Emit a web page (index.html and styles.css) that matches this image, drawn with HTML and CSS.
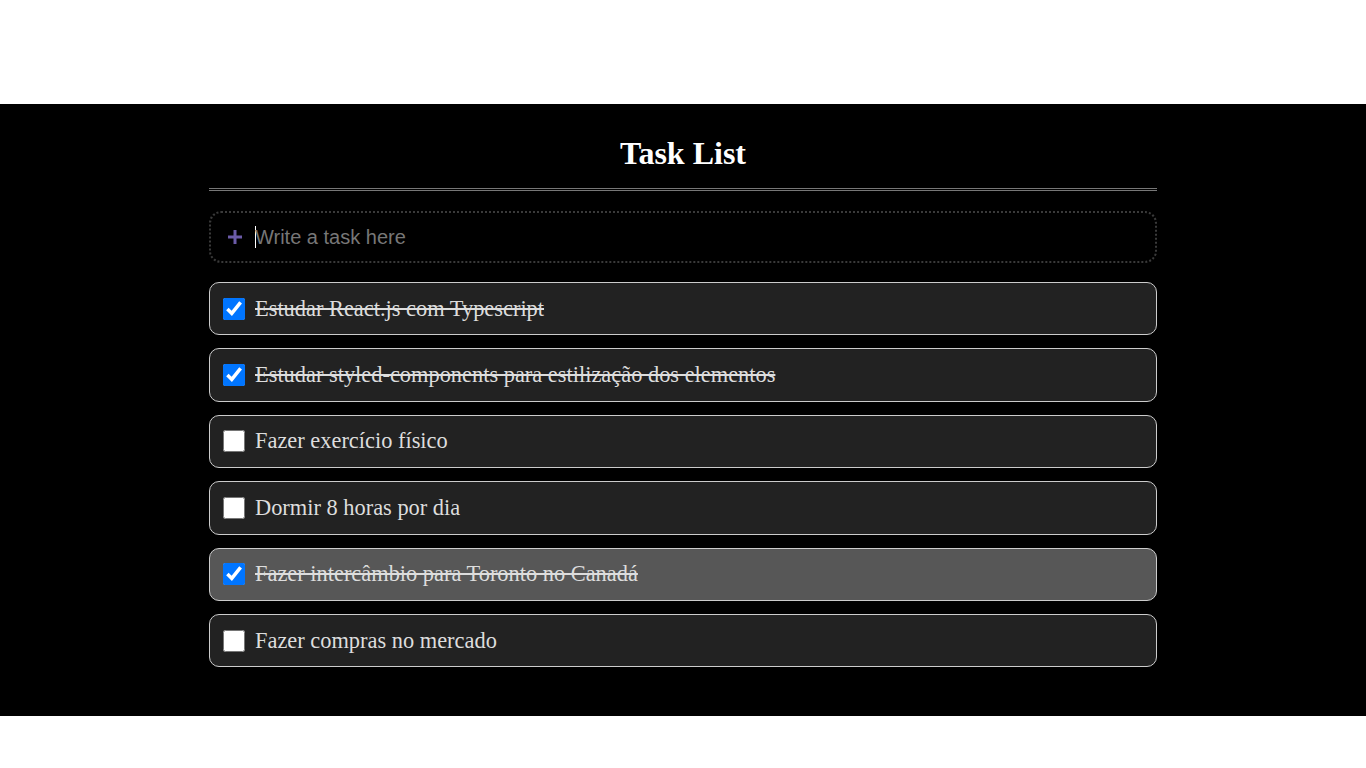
FILE: index.html
```html
<!DOCTYPE html>
<html lang="pt">
<head>
<meta charset="utf-8">
<title>Task List</title>
<link rel="stylesheet" href="styles.css">
</head>
<body>
<main class="app">
  <div class="container">
    <h1 class="title">Task List</h1>
    <div class="rule"></div>
    <label class="new-task">
      <svg class="plus" width="16" height="16" viewBox="0 0 16 16"><path d="M8 1v14M1 8h14" stroke="#6b5ba8" stroke-width="3"/></svg>
      <span class="caret"></span>
      <input class="new-input" type="text" placeholder="Write a task here">
    </label>
    <ul class="tasks">
      <li class="task"><input type="checkbox" checked><span class="label done">Estudar React.js com Typescript</span></li>
      <li class="task"><input type="checkbox" checked><span class="label done">Estudar styled-components para estilização dos elementos</span></li>
      <li class="task"><input type="checkbox"><span class="label">Fazer exercício físico</span></li>
      <li class="task"><input type="checkbox"><span class="label">Dormir 8 horas por dia</span></li>
      <li class="task hover"><input type="checkbox" checked><span class="label done">Fazer intercâmbio para Toronto no Canadá</span></li>
      <li class="task"><input type="checkbox"><span class="label">Fazer compras no mercado</span></li>
    </ul>
  </div>
</main>
</body>
</html>
```

FILE: styles.css
```css
html, body {
  margin: 0;
  padding: 0;
  background: #fff;
}
.app {
  margin-top: 104px;
  background: #000;
  padding: 31px 0 49px;
}
.container {
  width: 948px;
  margin: 0 auto;
  display: flex;
  flex-direction: column;
}
.title {
  margin: 0;
  font-family: "Liberation Serif", serif;
  font-weight: bold;
  font-size: 32px;
  line-height: 37px;
  color: #fff;
  text-align: center;
}
.rule {
  margin-top: 16px;
  height: 1px;
  border-top: 1px solid #777;
  border-bottom: 1px solid #777;
  margin-bottom: 20px;
}
.new-task {
  box-sizing: border-box;
  height: 52px;
  display: flex;
  align-items: center;
  padding: 0 0 0 16px;
  border: 2px dotted #3a3a3a;
  border-radius: 12px;
}
.plus {
  flex: none;
  margin-right: 12px;
}
.caret {
  flex: none;
  width: 1px;
  height: 22px;
  background: #fff;
  margin-right: -1px;
}
.new-input {
  flex: 1;
  background: transparent;
  border: none;
  outline: none;
  color: #ddd;
  font-family: "Liberation Sans", Arial, sans-serif;
  font-size: 20px;
  padding: 0;
}
.new-input::placeholder {
  color: #777;
}
.tasks {
  list-style: none;
  margin: 19px 0 0;
  padding: 0;
  display: flex;
  flex-direction: column;
  gap: 13px;
}
.task {
  box-sizing: border-box;
  height: 53.4px;
  display: flex;
  align-items: center;
  gap: 10px;
  padding: 0 0 0 13px;
  background: #222;
  border: 1px solid #ccc;
  border-radius: 10px;
}
.task.hover {
  background: #575757;
}
.task input {
  width: 22px;
  height: 22px;
  margin: 0;
  flex: none;
}
.label {
  font-family: "Liberation Serif", "Times New Roman", serif;
  font-size: 22.4px;
  color: #ddd;
}
.label.done {
  text-decoration: line-through;
}
```
